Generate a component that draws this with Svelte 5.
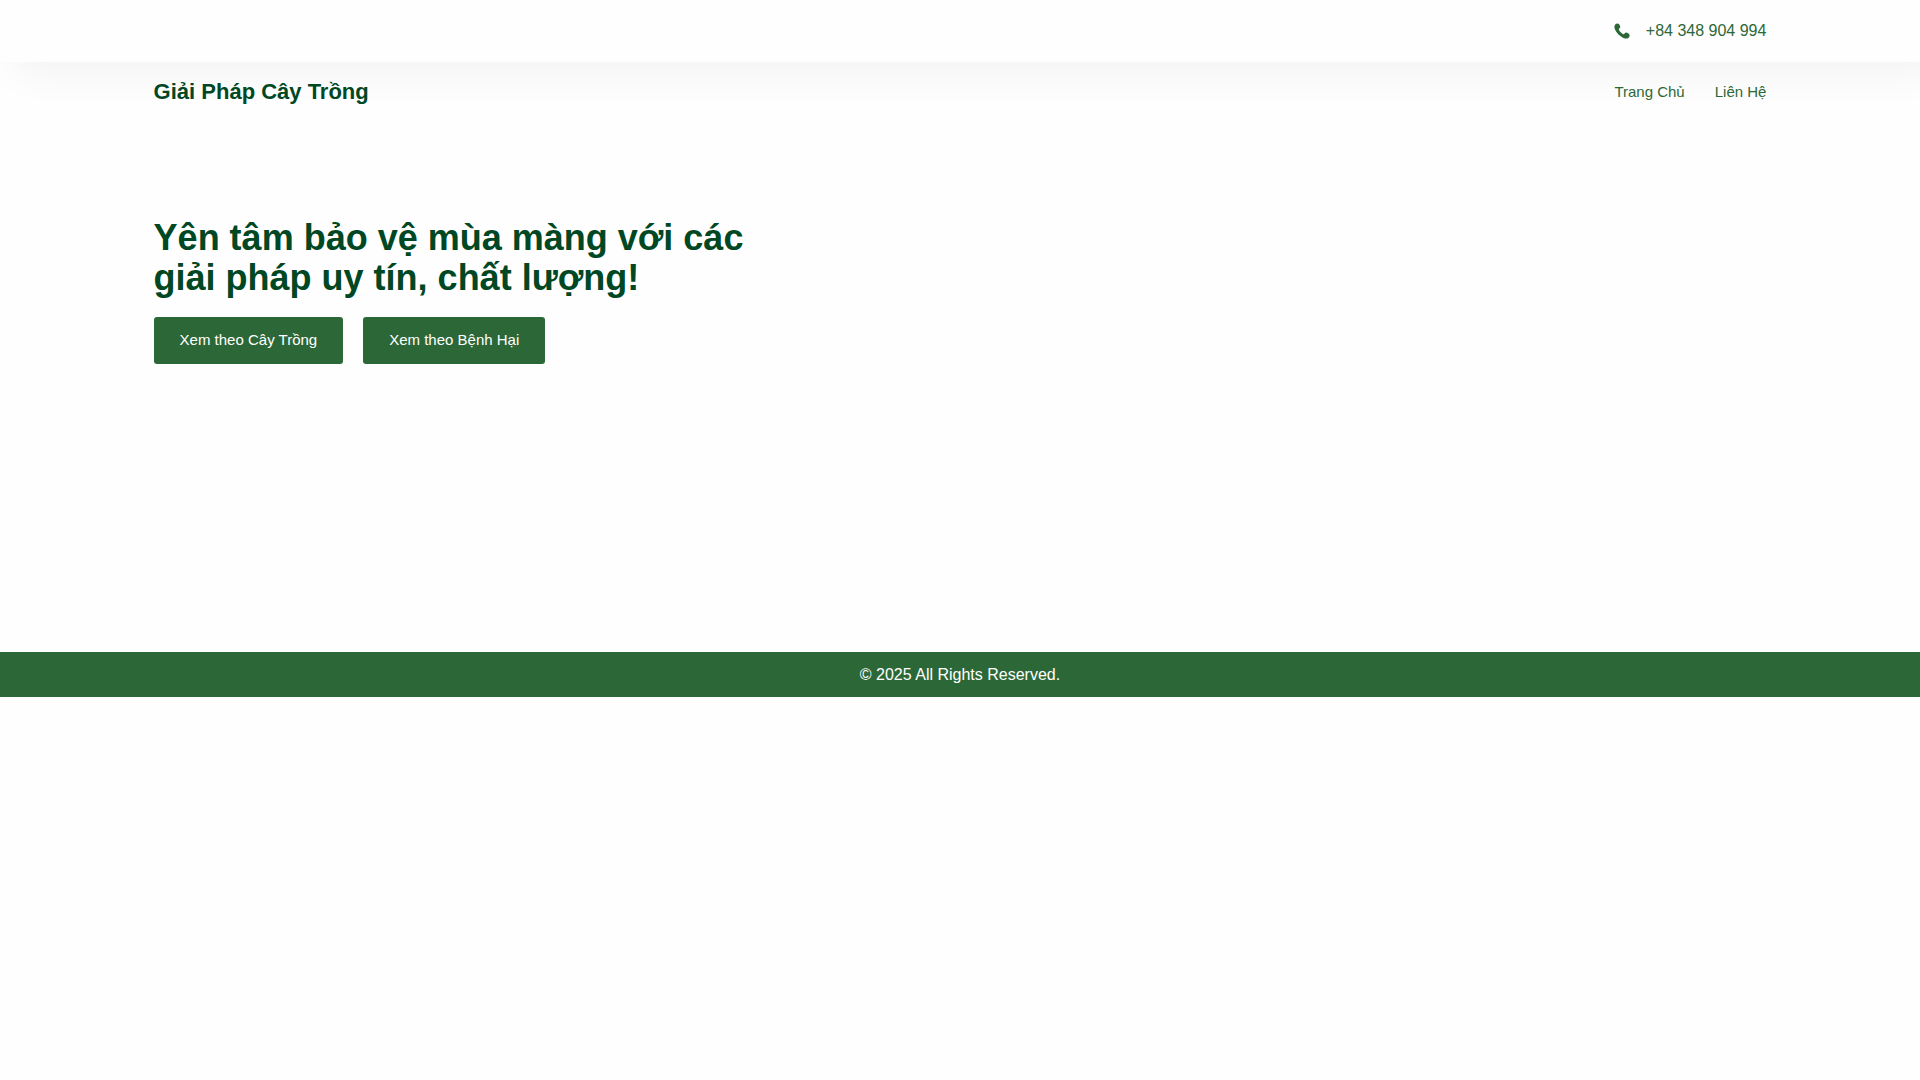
<script lang="ts">
  interface LinkItem {
    label: string;
    href: string;
  }

  const phone = '+84 348 904 994';

  const nav: LinkItem[] = [
    { label: 'Trang Chủ', href: '#home' },
    { label: 'Liên Hệ', href: '#contact' },
  ];

  const actions: LinkItem[] = [
    { label: 'Xem theo Cây Trồng', href: '#crops' },
    { label: 'Xem theo Bệnh Hại', href: '#diseases' },
  ];
</script>

<div class="page">
  <div class="topbar">
    <a class="phone" href="tel:+84348904994">
      <svg width="16" height="16" viewBox="0 0 16 16" fill="currentColor" aria-hidden="true">
        <path d="M1.200 1.500C2.200 .4 4.200 .2 4.900 1.100C5.700 2.200 6.400 3.300 6.300 4.200C6.200 5.100 4.800 5.500 4.800 6.200C5 7.700 8.200 11 9.600 11.200C10.300 11.200 10.900 9.700 11.900 9.500C12.800 9.400 14.400 10.400 15.200 11.200C16 12 15.600 13.800 14.600 14.700C13.600 15.600 11.700 15.800 9.900 15.200C6.200 13.800 2.100 9.700 .8 6.100C.2 4.300 .3 2.500 1.200 1.500Z" />
      </svg>
      <span>{phone}</span>
    </a>
  </div>

  <header class="header">
    <a class="brand" href="#home">Giải Pháp Cây Trồng</a>
    <nav class="nav">
      {#each nav as item}
        <a href={item.href}>{item.label}</a>
      {/each}
    </nav>
  </header>

  <main class="hero">
    <div class="hero-content">
      <h1>Yên tâm bảo vệ mùa màng với các giải pháp uy tín, chất lượng!</h1>
      <div class="actions">
        {#each actions as action}
          <a class="btn" href={action.href}>{action.label}</a>
        {/each}
      </div>
    </div>
  </main>

  <footer class="footer">© 2025 All Rights Reserved.</footer>
</div>

<style>
  :global(body) {
    margin: 0;
    background: #fefefe;
  }

  .page {
    --green: #2c6837;
    --dark: #004723;
    font-family: "Liberation Sans", sans-serif;
    font-size: 16px;
    color: var(--green);
    overflow-x: hidden;
  }

  a {
    color: inherit;
    text-decoration: none;
  }

  .topbar {
    display: flex;
    justify-content: flex-end;
    padding: 19px 8%;
    background: #fefefe;
    box-shadow: 15px 10px 40px rgba(0, 0, 0, 0.05);
  }

  .phone {
    display: flex;
    align-items: center;
    gap: 16px;
    line-height: 24px;
  }

  .header {
    display: flex;
    align-items: center;
    justify-content: space-between;
    padding: 16px 8%;
  }

  .brand {
    color: var(--dark);
    font-size: 22px;
    font-weight: 700;
    line-height: 28px;
  }

  .nav {
    display: flex;
    gap: 30px;
    font-size: 15px;
    line-height: 28px;
  }

  .hero {
    min-height: 530px;
    padding: 96px 8% 0;
    box-sizing: border-box;
  }

  .hero-content {
    max-width: 620px;
  }

  h1 {
    margin: 0 0 19px;
    color: var(--dark);
    font-size: 36px;
    font-weight: 700;
    line-height: 40px;
  }

  .actions {
    display: flex;
    flex-wrap: wrap;
    gap: 20px;
  }

  .btn {
    padding: 14px 26px 16px;
    border-radius: 3px;
    background: var(--green);
    color: #fff;
    font-size: 15px;
    line-height: 17px;
  }

  .footer {
    padding: 10px 8%;
    background: var(--green);
    color: #fff;
    line-height: 25px;
    text-align: center;
  }
</style>
